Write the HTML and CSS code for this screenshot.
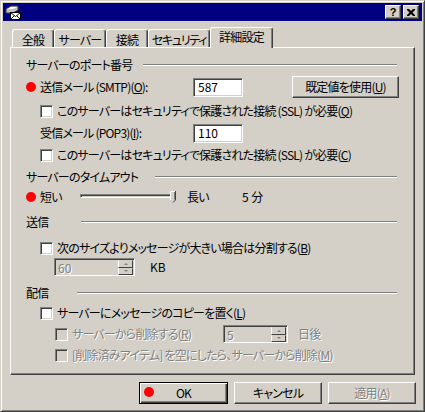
FILE: index.html
```html
<!DOCTYPE html>
<html lang="ja">
<head>
<meta charset="utf-8">
<title>詳細設定</title>
<link rel="stylesheet" href="styles.css">
</head>
<body>
<div class="window">
  <div class="titlebar">
    <svg class="app-icon" viewBox="0 0 16 16" width="16" height="16">
      <polygon points="1,5 6,2 13,2 13,6 8,9 1,9" fill="#c0c0c0" stroke="#404040" stroke-width="1"/>
      <polygon points="2,5 6,3 12,3 8,5" fill="#ffffff"/>
      <rect x="5.5" y="8.5" width="10" height="7" fill="#ffffff" stroke="#000000" stroke-width="1"/>
      <path d="M5.5 8.5 L10.5 12.5 L15.5 8.5 M5.5 15.5 L9 12 M15.5 15.5 L12 12" stroke="#000000" stroke-width="1" fill="none"/>
    </svg>
    <div class="caption-buttons">
      <span class="cap-btn cap-help">?</span>
      <span class="cap-btn">
        <svg viewBox="0 0 8 7" width="8" height="7"><path d="M0 0h2l2 2 2-2h2v1L5.5 3.5 8 6v1H6L4 5 2 7H0V6l2.5-2.5L0 1z" fill="#000"/></svg>
      </span>
    </div>
  </div>

  <div class="client">
    <div class="tabs">
      <div class="tab tab-general">全般</div>
      <div class="tab tab-server">サーバー</div>
      <div class="tab tab-conn">接続</div>
      <div class="tab tab-sec">セキュリティ</div>
      <div class="tab tab-adv selected">詳細設定</div>
    </div>

    <div class="panel">
      <div class="group-head"><span class="gh-label gh-port">サーバーのポート番号</span><span class="etch"></span></div>

      <div class="row row-smtp marked">
        <span class="mark"></span>
        <span class="field-label">送信メール (SMTP)(<u>O</u>):</span>
        <span class="textbox">587</span>
        <span class="btn btn-defaults">既定値を使用(<u>U</u>)</span>
      </div>

      <div class="row check-row ssl-row">
        <span class="checkbox"></span>
        <span class="label">このサーバーはセキュリティで保護された接続 (SSL) が必要(<u>Q</u>)</span>
      </div>

      <div class="row row-pop">
        <span class="field-label">受信メール (POP3)(<u>I</u>):</span>
        <span class="textbox">110</span>
      </div>

      <div class="row check-row ssl-row">
        <span class="checkbox"></span>
        <span class="label">このサーバーはセキュリティで保護された接続 (SSL) が必要(<u>C</u>)</span>
      </div>

      <div class="group-head"><span class="gh-label gh-timeout">サーバーのタイムアウト</span><span class="etch"></span></div>

      <div class="row row-timeout marked">
        <span class="mark"></span>
        <span class="short-label">短い</span>
        <span class="slider">
          <span class="track"></span>
          <svg class="thumb" viewBox="0 0 6 12" width="6" height="12">
            <polygon points="0,0 6,0 6,9 3,12 0,9" fill="#d4d0c8"/>
            <path d="M0.5 9 V0.5 H5" stroke="#ffffff" fill="none"/>
            <path d="M5.5 0 V9 L3 11.5" stroke="#404040" fill="none"/>
            <path d="M4.5 1 V8.5" stroke="#808080" fill="none"/>
          </svg>
        </span>
        <span class="long-label">長い</span>
        <span class="minutes">5 分</span>
      </div>

      <div class="group-head head-send"><span class="gh-label gh-send">送信</span><span class="etch"></span></div>

      <div class="row check-row split-row">
        <span class="checkbox"></span>
        <span class="label">次のサイズよりメッセージが大きい場合は分割する(<u>B</u>)</span>
      </div>

      <div class="row row-size">
        <span class="spin spin-size">
          <span class="spin-value disabled-text">60</span>
          <span class="spin-arrows">
            <span class="spin-btn"><span class="arrow-up"></span></span>
            <span class="spin-btn"><span class="arrow-down"></span></span>
          </span>
        </span>
        <span class="unit-kb">KB</span>
      </div>

      <div class="group-head head-deliver"><span class="gh-label gh-deliver">配信</span><span class="etch"></span></div>

      <div class="row check-row">
        <span class="checkbox"></span>
        <span class="label">サーバーにメッセージのコピーを置く(<u>L</u>)</span>
      </div>

      <div class="row check-row sub-row sub-delete">
        <span class="checkbox disabled"></span>
        <span class="label disabled-text delete-label">サーバーから削除する(<u>R</u>)</span>
        <span class="spin spin-days">
          <span class="spin-value disabled-text">5</span>
          <span class="spin-arrows">
            <span class="spin-btn"><span class="arrow-up"></span></span>
            <span class="spin-btn"><span class="arrow-down"></span></span>
          </span>
        </span>
        <span class="days-label disabled-text">日後</span>
      </div>

      <div class="row check-row sub-row">
        <span class="checkbox disabled"></span>
        <span class="label disabled-text">[削除済みアイテム] を空にしたら、サーバーから削除(<u>M</u>)</span>
      </div>
    </div>

    <div class="dialog-buttons">
      <span class="btn btn-dialog btn-ok"><span class="ok-mark"></span>OK</span>
      <span class="btn btn-dialog">キャンセル</span>
      <span class="btn btn-dialog disabled-text">適用(<u>A</u>)</span>
    </div>
  </div>
</div>
</body>
</html>
```

FILE: styles.css
```css
* {
  box-sizing: border-box;
}

html,
body {
  margin: 0;
  padding: 0;
}

body {
  width: 425px;
  height: 412px;
  overflow: hidden;
  background: #d4d0c8;
  font-family: "Noto Sans CJK JP", "Noto Sans", sans-serif;
  font-size: 12px;
  line-height: 14px;
  letter-spacing: -0.8px;
  color: #000;
  font-feature-settings: "palt";
}

u {
  text-decoration: underline;
  text-underline-offset: 1px;
}

.window {
  width: 425px;
  height: 412px;
  background: #d4d0c8;
  border: 1px solid;
  border-color: #d4d0c8 #404040 #404040 #d4d0c8;
  box-shadow: inset 1px 1px #ffffff, inset -1px -1px #808080;
  padding: 2px;
}

/* title bar */
.titlebar {
  height: 18px;
  background: #000080;
  display: flex;
  align-items: center;
  padding: 0 3px 0 2px;
}

.app-icon {
  display: block;
}

.caption-buttons {
  margin-left: auto;
  display: flex;
  gap: 2px;
}

.cap-btn {
  width: 16px;
  height: 14px;
  background: #d4d0c8;
  border: 1px solid;
  border-color: #ffffff #404040 #404040 #ffffff;
  box-shadow: inset -1px -1px #808080;
  display: flex;
  align-items: center;
  justify-content: center;
}

.cap-help {
  font-family: "Liberation Sans", sans-serif;
  font-weight: bold;
  font-size: 11px;
  line-height: 11px;
  letter-spacing: 0;
}

/* client */
.client {
  padding: 6px 7px 0;
}

.tabs {
  display: flex;
  align-items: flex-end;
  height: 20px;
  padding-left: 2px;
}

.tab {
  height: 18px;
  border: 1px solid;
  border-bottom: none;
  border-color: #ffffff #404040 #404040 #ffffff;
  border-radius: 3px 3px 0 0;
  box-shadow: inset -1px 0 #808080;
  display: flex;
  align-items: center;
  justify-content: center;
  padding-top: 2px;
  white-space: nowrap;
  background: #d4d0c8;
}

.tab-general { width: 42px; }
.tab-server { width: 52px; }
.tab-conn { width: 42px; }
.tab-sec { width: 62px; letter-spacing: -1.3px; }
.tab-adv { width: 63px; }

.tab.selected {
  height: 21px;
  margin-bottom: -1px;
  position: relative;
  z-index: 1;
  padding-top: 0;
  padding-bottom: 2px;
}

.panel {
  width: 405px;
  height: 328px;
  border: 1px solid;
  border-color: #ffffff #404040 #404040 #ffffff;
  box-shadow: inset -1px -1px #808080;
  padding: 7px 0 0 15px;
}

/* group headers */
.group-head {
  width: 371px;
  height: 20px;
  display: flex;
  align-items: center;
}

.gh-label {
  white-space: nowrap;
  flex-shrink: 0;
}

.gh-port { width: 117px; }
.gh-timeout { width: 129px; }
.gh-send { width: 55px; }
.gh-deliver { width: 51px; }

.etch {
  flex: 1;
  height: 2px;
  border-top: 1px solid #808080;
  border-bottom: 1px solid #ffffff;
}

.head-send { margin-top: 5px; }
.head-deliver { margin-top: 6px; }

/* rows */
.row {
  display: flex;
  align-items: center;
  padding-left: 14px;
  white-space: nowrap;
}

.row.marked {
  padding-left: 0;
}

.mark {
  width: 10px;
  height: 10px;
  border-radius: 50%;
  background: #ff0000;
  margin-right: 4px;
  flex-shrink: 0;
}

.row-smtp { height: 24px; }
.row-pop { height: 20px; }
.check-row { height: 20px; }
.ssl-row.check-row { height: 24px; }
.row-timeout { height: 20px; }
.split-row.check-row { height: 18px; margin-top: 7px; }
.row-size { height: 20px; padding-left: 28px; }
.sub-row { padding-left: 29px; }
.sub-delete.check-row { height: 22px; }

.field-label {
  width: 153px;
  flex-shrink: 0;
}

.textbox {
  width: 50px;
  height: 19px;
  background: #ffffff;
  border: 1px solid;
  border-color: #808080 #ffffff #ffffff #808080;
  box-shadow: inset 1px 1px #404040, inset -1px -1px #d4d0c8;
  padding-left: 4px;
  display: flex;
  align-items: center;
  letter-spacing: 0;
}

.btn {
  background: #d4d0c8;
  border: 1px solid;
  border-color: #ffffff #404040 #404040 #ffffff;
  box-shadow: inset -1px -1px #808080;
  display: flex;
  align-items: center;
  justify-content: center;
  white-space: nowrap;
}

.btn-defaults {
  width: 107px;
  height: 22px;
  margin-left: 49px;
}

.checkbox {
  width: 13px;
  height: 13px;
  background: #ffffff;
  border: 1px solid;
  border-color: #808080 #ffffff #ffffff #808080;
  box-shadow: inset 1px 1px #404040, inset -1px -1px #d4d0c8;
  margin-right: 4px;
  flex-shrink: 0;
}

.checkbox.disabled {
  background: #d4d0c8;
}

.disabled-text {
  color: #808080;
  text-shadow: 1px 1px 0 #ffffff;
}

/* timeout slider */
.short-label {
  width: 40px;
}

.slider {
  position: relative;
  width: 96px;
  height: 14px;
  flex-shrink: 0;
}

.track {
  position: absolute;
  left: 0;
  right: 0;
  top: 4px;
  height: 4px;
  background: #d4d0c8;
  border: 1px solid;
  border-color: #808080 #ffffff #ffffff #808080;
  box-shadow: inset 1px 1px #404040;
}

.thumb {
  position: absolute;
  right: 0;
  top: 1px;
  display: block;
}

.long-label {
  width: 55px;
  margin-left: 11px;
}

.minutes {
  letter-spacing: 0;
}

/* spin boxes */
.spin {
  display: flex;
  height: 18px;
  background: #d4d0c8;
  border: 1px solid;
  border-color: #808080 #ffffff #ffffff #808080;
  box-shadow: inset 1px 1px #404040;
  padding: 1px 1px 0 1px;
  flex-shrink: 0;
}

.spin-size { width: 81px; }
.spin-days { width: 65px; }

.spin-value {
  flex: 1;
  padding-left: 2px;
  line-height: 15px;
  letter-spacing: 0;
}

.spin-arrows {
  width: 15px;
  display: flex;
  flex-direction: column;
}

.spin-btn {
  flex: 1;
  background: #d4d0c8;
  border: 1px solid;
  border-color: #d4d0c8 #404040 #404040 #ffffff;
  display: flex;
  align-items: center;
  justify-content: center;
}

.arrow-up,
.arrow-down {
  width: 0;
  height: 0;
  border-left: 2px solid transparent;
  border-right: 2px solid transparent;
}

.arrow-up {
  border-bottom: 2px solid #808080;
}

.arrow-down {
  border-top: 2px solid #808080;
}

.unit-kb {
  margin-left: 15px;
  letter-spacing: 0;
}

.delete-label {
  width: 151px;
  flex-shrink: 0;
}

.days-label {
  margin-left: 10px;
}

/* dialog buttons */
.dialog-buttons {
  display: flex;
  justify-content: flex-end;
  gap: 6px;
  margin-top: 7px;
  margin-right: -1px;
}

.btn-dialog {
  width: 88px;
  height: 22px;
  flex-shrink: 0;
}

.btn-ok {
  width: 89px;
  position: relative;
  border-color: #000000;
  box-shadow: inset 1px 1px #ffffff, inset -1px -1px #404040, inset -2px -2px #808080;
}

.ok-mark {
  position: absolute;
  left: 4px;
  top: 4px;
  width: 10px;
  height: 10px;
  border-radius: 50%;
  background: #ff0000;
}
```
